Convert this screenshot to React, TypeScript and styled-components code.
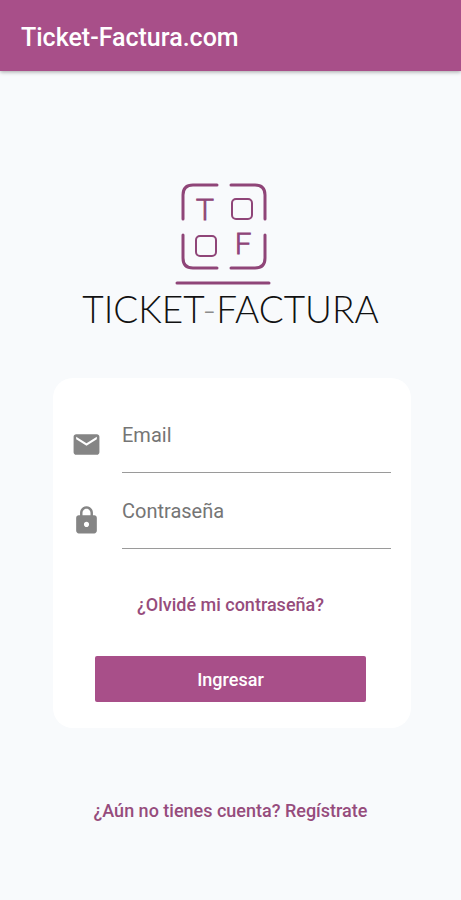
import React from "react";
import styled, { createGlobalStyle } from "styled-components";
import { MdEmail, MdLock } from "react-icons/md";

const brand = "#a84f89";
const brandDark = "#8f4578";
const linkColor = "#964c7c";

const GlobalStyle = createGlobalStyle`
  *, *::before, *::after { box-sizing: border-box; }
  body {
    margin: 0;
    background: #f8fafc;
    font-family: Roboto, "Liberation Sans", sans-serif;
  }
`;

const Page = styled.div`
  min-height: 100vh;
  display: flex;
  flex-direction: column;
`;

const AppBar = styled.header`
  display: flex;
  align-items: center;
  min-height: 71px;
  padding: 4px 21px 0;
  background: ${brand};
  box-shadow: 0 1px 4px rgba(0, 0, 0, 0.35);
`;

const AppTitle = styled.h1`
  margin: 0;
  color: #ffffff;
  font-size: 25px;
  line-height: 32px;
  font-weight: 500;
`;

const Main = styled.main`
  flex: 1;
  display: flex;
  flex-direction: column;
  align-items: center;
  padding: 111px 50px 40px;
`;

const Brand = styled.div`
  display: flex;
  flex-direction: column;
  align-items: center;
  color: #111111;
`;

const Emblem = styled.svg`
  display: block;
  margin-right: 16px;
`;

const EmblemLetter = styled.text`
  fill: ${brandDark};
  stroke: ${brandDark};
  stroke-width: 1px;
  font-family: Lato, sans-serif;
  font-size: 30px;
  font-weight: 300;
  text-anchor: middle;
`;

const Wordmark = styled.div`
  font-family: Lato, sans-serif;
  font-size: 37px;
  line-height: 46px;
  font-weight: 300;
  white-space: nowrap;
`;

const Dash = styled.span`
  color: #8c8c8c;
`;

const Card = styled.form`
  align-self: stretch;
  margin: 46px 0 0 3px;
  padding: 44px 20px 26px;
  border-radius: 20px;
  background: #ffffff;
  display: flex;
  flex-direction: column;
`;

const Field = styled.div`
  display: grid;
  grid-template-columns: 26px 1fr;
  column-gap: 23px;
  align-items: center;
  margin-bottom: 25px;
  color: #858585;
`;

const FieldIcon = styled.span`
  display: flex;
  justify-content: center;
  padding-bottom: 6px;

  svg {
    flex: none;
  }
`;

const FieldBody = styled.div`
  display: flex;
  flex-direction: column;
  border-bottom: 1px solid #9a9a9a;
`;

const Label = styled.label`
  color: #757575;
  font-size: 20px;
  line-height: 26px;
`;

const Input = styled.input`
  width: 100%;
  height: 24px;
  padding: 0;
  border: 0;
  outline: 0;
  background: transparent;
  color: #212121;
  font: inherit;
  font-size: 18px;
`;

const TextLink = styled.a`
  color: ${linkColor};
  font-size: 18px;
  line-height: 24px;
  font-weight: 500;
  text-align: center;
  text-decoration: none;
`;

const Recovery = styled.div`
  display: flex;
  justify-content: center;
  margin: 19px 3px 39px 0;
`;

const SubmitButton = styled.button`
  margin: 0 25px 0 22px;
  height: 46px;
  border: 0;
  border-radius: 2px;
  background: ${brand};
  color: #ffffff;
  font-family: inherit;
  font-size: 18px;
  font-weight: 500;
  cursor: pointer;
`;

const SignUp = styled.div`
  margin-top: 71px;
`;

function LogoEmblem() {
  return (
    <Emblem width="96" height="104" viewBox="0 0 96 104" aria-hidden="true">
      <g fill="none" stroke={brandDark} strokeWidth="3" strokeLinecap="round">
        <path d="M8 37V13Q8 3 18 3H42" />
        <path d="M56 3H80Q90 3 90 13V37" />
        <path d="M8 53V76Q8 86 18 86H42" />
        <path d="M56 86H80Q90 86 90 76V53" />
        <path d="M2 101H94" />
      </g>
      <g fill="none" stroke={brandDark} strokeWidth="2">
        <rect x="57" y="17" width="20" height="20" rx="4" />
        <rect x="21" y="54" width="20" height="20" rx="4" />
      </g>
      <EmblemLetter x="30" y="38">T</EmblemLetter>
      <EmblemLetter x="68" y="72">F</EmblemLetter>
    </Emblem>
  );
}

export default function App() {
  return (
    <>
      <GlobalStyle />
      <Page>
        <AppBar>
          <AppTitle>Ticket-Factura.com</AppTitle>
        </AppBar>
        <Main>
          <Brand>
            <LogoEmblem />
            <Wordmark>
              TICKET<Dash>-</Dash>FACTURA
            </Wordmark>
          </Brand>
          <Card onSubmit={(e: React.FormEvent) => e.preventDefault()}>
            <Field>
              <FieldIcon>
                <MdEmail size={31} aria-hidden="true" />
              </FieldIcon>
              <FieldBody>
                <Label htmlFor="email">Email</Label>
                <Input id="email" type="email" autoComplete="email" />
              </FieldBody>
            </Field>
            <Field>
              <FieldIcon>
                <MdLock size={31} aria-hidden="true" />
              </FieldIcon>
              <FieldBody>
                <Label htmlFor="password">Contraseña</Label>
                <Input id="password" type="password" autoComplete="current-password" />
              </FieldBody>
            </Field>
            <Recovery>
              <TextLink href="#recuperar">¿Olvidé mi contraseña?</TextLink>
            </Recovery>
            <SubmitButton type="submit">Ingresar</SubmitButton>
          </Card>
          <SignUp>
            <TextLink href="#registro">¿Aún no tienes cuenta? Regístrate</TextLink>
          </SignUp>
        </Main>
      </Page>
    </>
  );
}
